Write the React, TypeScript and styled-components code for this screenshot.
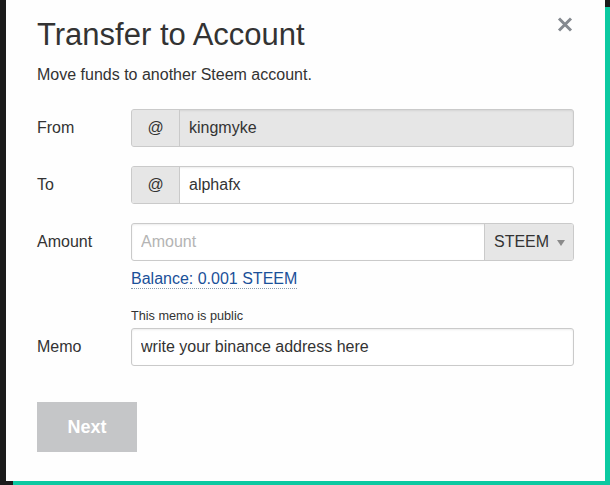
import styled, { createGlobalStyle } from "styled-components";

const GlobalStyle = createGlobalStyle`
  html, body {
    margin: 0;
    padding: 0;
  }
  body {
    background: #1b1b1b;
    font-family: "Liberation Sans", Arial, sans-serif;
    color: #333;
  }
  * {
    box-sizing: border-box;
  }
`;

const Page = styled.div`
  position: relative;
  width: 610px;
  height: 485px;
  overflow: hidden;
  background: #1b1b1b;
`;

const Backdrop = styled.div`
  margin: 7px 0 0 13px;
  height: 478px;
  background: #0cc9a1;
`;

const Modal = styled.div`
  position: absolute;
  top: 0;
  left: 6px;
  width: 599px;
  height: 481px;
  background: #fefefe;
  padding: 17px 31px 0 31px;
`;

const Close = styled.button`
  position: absolute;
  top: 17px;
  right: 32px;
  width: 16px;
  height: 15px;
  padding: 0;
  border: 0;
  background: none;
  cursor: pointer;
  display: flex;
`;

const Title = styled.h1`
  margin: 0;
  font-size: 31px;
  line-height: 36px;
  font-weight: 400;
  color: #333;
`;

const Subtitle = styled.p`
  margin: 12px 0 0;
  font-size: 16px;
  line-height: 20px;
  color: #333;
`;

const Form = styled.form`
  margin-top: 24px;
  display: flex;
  flex-direction: column;
  gap: 19px;
`;

const Row = styled.div<{ $alignEnd?: boolean }>`
  display: grid;
  grid-template-columns: 94px 443px;
  align-items: ${(p) => (p.$alignEnd ? "end" : "start")};
`;

const Label = styled.label`
  font-size: 16px;
  line-height: 38px;
  color: #333;
`;

const FieldCol = styled.div`
  display: flex;
  flex-direction: column;
`;

const InputGroup = styled.div<{ $disabled?: boolean }>`
  display: flex;
  height: 38px;
  border: 1px solid #cacaca;
  border-radius: 3px;
  overflow: hidden;
  background: ${(p) => (p.$disabled ? "#e6e6e6" : "#fff")};
  box-shadow: inset 0 1px 2px rgba(10, 10, 10, 0.08);
`;

const Addon = styled.span`
  flex: 0 0 48px;
  display: flex;
  align-items: center;
  justify-content: center;
  background: #e6e6e6;
  border-right: 1px solid #cacaca;
  font-size: 16px;
  color: #333;
`;

const Field = styled.input`
  flex: 1;
  min-width: 0;
  border: 0;
  padding: 0 9px;
  font-family: inherit;
  font-size: 16px;
  color: #333;
  background: transparent;
  outline: none;
  &::placeholder {
    color: #b4b4b4;
  }
`;

const Select = styled.div`
  flex: 0 0 89px;
  display: flex;
  align-items: center;
  justify-content: space-between;
  padding: 0 8px 0 9px;
  background: #e6e6e6;
  border-left: 1px solid #cacaca;
  font-size: 16px;
  color: #333;
`;

const Caret = styled.span`
  width: 0;
  height: 0;
  border-left: 4px solid transparent;
  border-right: 4px solid transparent;
  border-top: 6px solid #8a8a8a;
  margin-top: 1px;
`;

const Balance = styled.a`
  align-self: flex-start;
  margin-top: 9px;
  font-size: 16px;
  line-height: 18px;
  color: #1a5099;
  text-decoration: none;
  border-bottom: 1px dotted #8899aa;
`;

const Note = styled.div`
  font-size: 12.7px;
  line-height: 16px;
  color: #333;
  margin-bottom: 4px;
`;

const NextButton = styled.button`
  margin-top: 36px;
  width: 100px;
  height: 50px;
  border: 0;
  background: #c5c6c8;
  color: #fff;
  font-family: inherit;
  font-size: 18px;
  font-weight: 700;
`;

export default function App() {
  return (
    <>
      <GlobalStyle />
      <Page>
        <Backdrop />
        <Modal>
          <Close aria-label="Close">
            <svg width="16" height="15" viewBox="0 0 16 15">
              <path
                d="M2 1.5 L14 13.5 M14 1.5 L2 13.5"
                stroke="#858a90"
                strokeWidth="3"
              />
            </svg>
          </Close>
          <Title>Transfer to Account</Title>
          <Subtitle>Move funds to another Steem account.</Subtitle>
          <Form onSubmit={(e) => e.preventDefault()}>
            <Row>
              <Label>From</Label>
              <InputGroup $disabled>
                <Addon>@</Addon>
                <Field value="kingmyke" disabled readOnly />
              </InputGroup>
            </Row>
            <Row>
              <Label>To</Label>
              <InputGroup>
                <Addon>@</Addon>
                <Field value="alphafx" readOnly />
              </InputGroup>
            </Row>
            <Row>
              <Label>Amount</Label>
              <FieldCol>
                <InputGroup>
                  <Field placeholder="Amount" />
                  <Select>
                    STEEM
                    <Caret />
                  </Select>
                </InputGroup>
                <Balance href="#">Balance: 0.001 STEEM</Balance>
              </FieldCol>
            </Row>
            <Row $alignEnd>
              <Label>Memo</Label>
              <FieldCol>
                <Note>This memo is public</Note>
                <InputGroup>
                  <Field value="write your binance address here" readOnly />
                </InputGroup>
              </FieldCol>
            </Row>
          </Form>
          <NextButton type="button">Next</NextButton>
        </Modal>
      </Page>
    </>
  );
}
